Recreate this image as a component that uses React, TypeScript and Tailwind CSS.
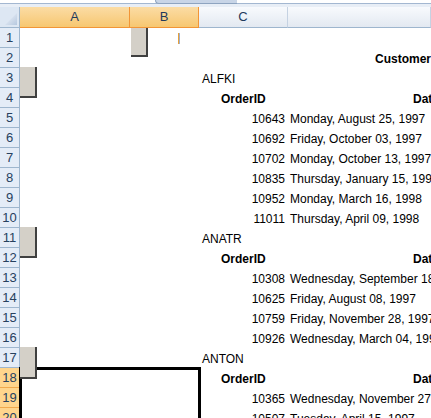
import React from 'react';

// Worksheet view: customer orders grouped by CustomerID, with outline buttons
// and a selected block over rows 18-20, columns A:B.

type Row = {
  c?: string;
  cBold?: boolean;
  cAlign?: 'left' | 'right' | 'indent';
  d?: string;
  dPad?: number;
  dBold?: boolean;
};

const rows: Row[] = [
  {},
  { d: 'CustomerID', dPad: 87, dBold: true },
  { c: 'ALFKI' },
  { c: 'OrderID', cBold: true, cAlign: 'indent', d: 'Date', dPad: 125, dBold: true },
  { c: '10643', cAlign: 'right', d: 'Monday, August 25, 1997' },
  { c: '10692', cAlign: 'right', d: 'Friday, October 03, 1997' },
  { c: '10702', cAlign: 'right', d: 'Monday, October 13, 1997' },
  { c: '10835', cAlign: 'right', d: 'Thursday, January 15, 1998' },
  { c: '10952', cAlign: 'right', d: 'Monday, March 16, 1998' },
  { c: '11011', cAlign: 'right', d: 'Thursday, April 09, 1998' },
  { c: 'ANATR' },
  { c: 'OrderID', cBold: true, cAlign: 'indent', d: 'Date', dPad: 125, dBold: true },
  { c: '10308', cAlign: 'right', d: 'Wednesday, September 18, 1996' },
  { c: '10625', cAlign: 'right', d: 'Friday, August 08, 1997' },
  { c: '10759', cAlign: 'right', d: 'Friday, November 28, 1997' },
  { c: '10926', cAlign: 'right', d: 'Wednesday, March 04, 1998' },
  { c: 'ANTON' },
  { c: 'OrderID', cBold: true, cAlign: 'indent', d: 'Date', dPad: 125, dBold: true },
  { c: '10365', cAlign: 'right', d: 'Wednesday, November 27, 1996' },
  { c: '10507', cAlign: 'right', d: 'Tuesday, April 15, 1997' },
];

const selectedRows = [18, 19, 20];

function ColHeader({ label, width, selected }: { label: string; width?: string; selected?: boolean }) {
  return (
    <div
      className={
        (width ?? 'flex-1') +
        ' flex items-center justify-center border-r text-[13px] text-[#1f3a5c] ' +
        (selected
          ? 'bg-gradient-to-b from-[#fbdca4] to-[#f7c770] border-[#f29536] border-b border-b-[#f29536]'
          : 'bg-gradient-to-b from-[#f8fafd] to-[#e3e9f1] border-[#c5d2e2] border-b border-b-[#9eb6ce]')
      }
    >
      {label}
    </div>
  );
}

function OutlineButton({ top, left, height }: { top: number; left: number; height: number }) {
  return (
    <div
      className="absolute w-[17px] bg-[#d4d0c8] border-r-2 border-b-2 border-[#404040]"
      style={{ top, left, height }}
    />
  );
}

export default function App() {
  return (
    <div
      className="relative w-[431px] h-[418px] overflow-hidden bg-white"
      style={{ fontFamily: '"Liberation Sans", Arial, sans-serif' }}
    >
      {/* formula bar bottom edge */}
      <div className="relative h-[7px]">
        <div className="h-[3px] bg-white" />
        <div className="absolute left-[155px] top-0 w-[82px] h-[4px] bg-[#c8d5e7] border-b border-l border-[#8ea4c0] rounded-bl-[4px]" />
        <div className="h-px bg-[#a3b7d1]" />
        <div className="h-[3px] bg-[#e8eef6]" />
      </div>

      {/* column headers */}
      <div className="flex h-[21px]">
        <div className="relative w-[20px] bg-[#dde7f3] border-r border-b border-[#9eb6ce]">
          <div
            className="absolute right-[2px] bottom-[2px] w-[12px] h-[12px] bg-gradient-to-br from-[#f4f7fb] to-[#b6c8df]"
            style={{ clipPath: 'polygon(100% 0, 100% 100%, 0 100%)' }}
          />
        </div>
        <ColHeader label="A" width="w-[110px]" selected />
        <ColHeader label="B" width="w-[69px]" selected />
        <ColHeader label="C" width="w-[89px]" />
        <ColHeader label="" />
      </div>

      {/* sheet rows */}
      {rows.map((row, i) => {
        const n = i + 1;
        const sel = selectedRows.includes(n);
        return (
          <div key={n} className="flex h-[20px]">
            <div
              className={
                'w-[20px] shrink-0 flex items-center justify-center border-r border-b text-[13px] text-[#27415f] ' +
                (sel ? 'bg-[#ffd58d] border-[#f1a94d] border-r-[#f29536]' : 'bg-[#e4ecf7] border-[#9eb6ce]')
              }
            >
              {n}
            </div>
            <div className="w-[110px] shrink-0" />
            <div className="w-[69px] shrink-0" />
            <div
              className={
                'w-[89px] shrink-0 flex items-end pb-[2px] whitespace-nowrap text-[12px] leading-[14px] text-black ' +
                (row.cAlign === 'right' ? 'justify-end pr-[3px]' : row.cAlign === 'indent' ? 'pl-[22px]' : 'pl-[3px]') +
                (row.cBold ? ' font-bold' : '')
              }
            >
              {row.c}
            </div>
            <div
              className={
                'flex-1 flex items-end pb-[2px] whitespace-nowrap overflow-hidden text-[12px] leading-[14px] text-black' +
                (row.dBold ? ' font-bold' : '')
              }
              style={{ paddingLeft: row.dPad ?? 2 }}
            >
              {row.d}
            </div>
          </div>
        );
      })}

      {/* outline group buttons */}
      <OutlineButton top={28} left={131} height={29} />
      <OutlineButton top={67} left={20} height={31} />
      <OutlineButton top={227} left={20} height={31} />
      <OutlineButton top={347} left={20} height={32} />

      {/* text cursor in B1 */}
      <div className="absolute left-[178px] top-[33px] w-[1px] h-[11px] bg-[#e8a23a]" />
      <div className="absolute left-[179px] top-[33px] w-[1px] h-[11px] bg-[#9fb0d0]" />

      {/* selection A18:B20 */}
      <div className="absolute left-[19px] top-[367px] w-[182px] h-[80px] border-[3px] border-black" />
      <OutlineButton top={347} left={20} height={32} />
    </div>
  );
}
